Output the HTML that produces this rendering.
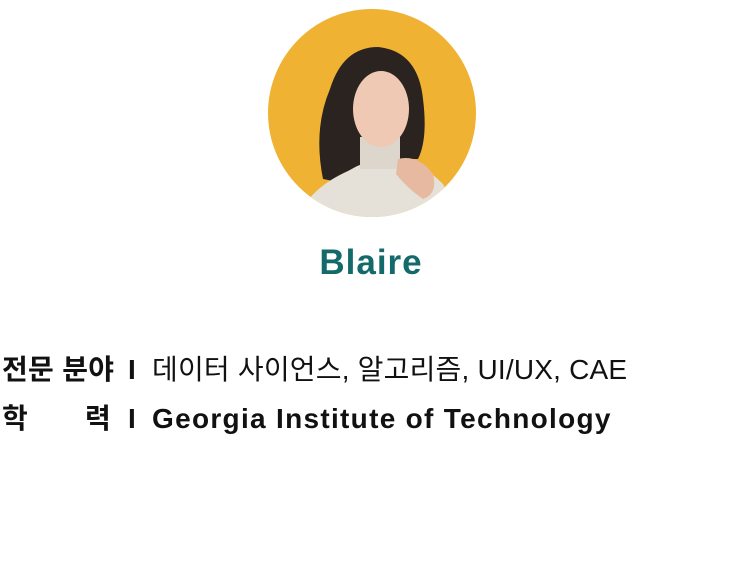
<!DOCTYPE html>
<html><head><meta charset="utf-8"><style>
html,body{margin:0;padding:0;background:#fff;width:744px;height:573px;overflow:hidden;position:relative;font-family:"Liberation Sans","Noto Sans CJK KR",sans-serif}
.name{position:absolute;left:0;width:742px;top:243px;text-align:center;font-size:35px;font-weight:bold;color:#14696b;letter-spacing:1px}
.t{position:absolute;font-size:28px;color:#111;white-space:nowrap;line-height:40px}
b{font-weight:bold}
</style></head><body>
<svg style="position:absolute;left:268px;top:9px" width="208" height="208" viewBox="0 0 208 208">
<defs><clipPath id="c"><circle cx="104" cy="104" r="104"/></clipPath></defs>
<g clip-path="url(#c)">
<rect width="208" height="208" fill="#f0b232"/>
<path d="M55 170 Q45 120 62 80 Q75 38 110 38 Q150 42 155 90 Q160 130 150 150 L120 150 L80 175 Z" fill="#2a231f"/>
<path d="M30 210 Q40 180 80 162 Q100 150 120 148 Q150 150 175 175 Q185 195 185 210 Z" fill="#e6e1d8"/>
<rect x="92" y="128" width="40" height="32" fill="#dcd6cc"/>
<ellipse cx="113" cy="100" rx="28" ry="38" fill="#efc9b4"/>
<path d="M130 150 Q150 145 165 165 Q170 185 155 190 Q140 180 128 165 Z" fill="#e8b9a1"/>
</g></svg>
<div class="name">Blaire</div>
<div class="t" style="top:350px;left:2px;font-weight:bold;letter-spacing:0.3px">전문 분야</div>
<div class="t" style="top:350px;left:128px;font-weight:bold">I</div>
<div class="t" style="top:350px;left:152px;letter-spacing:0.2px">데이터 사이언스, 알고리즘, UI/UX, CAE</div>
<div class="t" style="top:399px;left:2px;font-weight:bold">학</div>
<div class="t" style="top:399px;left:85px;font-weight:bold">력</div>
<div class="t" style="top:399px;left:128px;font-weight:bold">I</div>
<div class="t" style="top:399px;left:152px;font-weight:bold;letter-spacing:1.3px">Georgia Institute of Technology</div>
</body></html>
